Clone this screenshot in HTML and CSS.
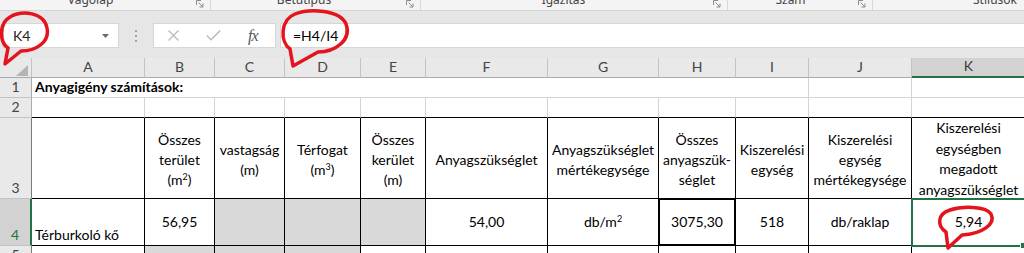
FILE: index.html
```html
<!DOCTYPE html>
<html lang="hu">
<head>
<meta charset="utf-8">
<title>Anyagigény számítások</title>
<link rel="stylesheet" href="styles.css">
</head>
<body>
<div class="app">
  <div class="ribbon">
    <div class="group g1"><span class="glabel">Vágólap</span><svg class="launcher" width="8" height="8" viewBox="0 0 8 8"><path d="M0.5 5V0.5H5M2.5 2.5L7 7M7 3.5V7H3.5" fill="none" stroke="#8a8a8a" stroke-width="1"/></svg></div>
    <div class="group g2"><span class="glabel">Betűtípus</span><svg class="launcher" width="8" height="8" viewBox="0 0 8 8"><path d="M0.5 5V0.5H5M2.5 2.5L7 7M7 3.5V7H3.5" fill="none" stroke="#8a8a8a" stroke-width="1"/></svg></div>
    <div class="group g3"><span class="glabel">Igazítás</span><svg class="launcher" width="8" height="8" viewBox="0 0 8 8"><path d="M0.5 5V0.5H5M2.5 2.5L7 7M7 3.5V7H3.5" fill="none" stroke="#8a8a8a" stroke-width="1"/></svg></div>
    <div class="group g4"><span class="glabel">Szám</span><svg class="launcher" width="8" height="8" viewBox="0 0 8 8"><path d="M0.5 5V0.5H5M2.5 2.5L7 7M7 3.5V7H3.5" fill="none" stroke="#8a8a8a" stroke-width="1"/></svg></div>
    <div class="group g5"><span class="glabel">Stílusok</span></div>
  </div>

  <div class="fbar">
    <div class="namebox"><span class="nb-text">K4</span><svg width="7" height="4" viewBox="0 0 7 4"><path d="M0 0H7L3.5 4Z" fill="#6a6a6a"/></svg></div>
    <div class="grip"><span class="dot"></span><span class="dot"></span><span class="dot"></span></div>
    <div class="fxbox">
      <svg class="ic-x" width="11" height="11" viewBox="0 0 11 11"><path d="M0.5 0.5L10.5 10.5M10.5 0.5L0.5 10.5" stroke="#bcbcbc" stroke-width="1.4" fill="none"/></svg>
      <svg class="ic-ok" width="15" height="11" viewBox="0 0 15 11"><path d="M0.8 5.5L5 9.8L14.2 0.6" stroke="#bcbcbc" stroke-width="1.5" fill="none"/></svg>
      <span class="fx">fx</span>
    </div>
    <div class="formula">=H4/I4</div>
  </div>

  <div class="sheet">
    <!-- column headers -->
    <div class="cell ch corner"><svg width="12" height="11" viewBox="0 0 12 11"><path d="M12 0V11H0Z" fill="#b4b4b4"/></svg></div>
    <div class="cell ch">A</div>
    <div class="cell ch">B</div>
    <div class="cell ch">C</div>
    <div class="cell ch">D</div>
    <div class="cell ch">E</div>
    <div class="cell ch">F</div>
    <div class="cell ch">G</div>
    <div class="cell ch">H</div>
    <div class="cell ch">I</div>
    <div class="cell ch">J</div>
    <div class="cell ch ch-sel">K</div>

    <!-- row 1 -->
    <div class="cell rh">1</div>
    <div class="cell left title span9">Anyagigény számítások:</div>
    <div class="cell"></div>
    <div class="cell"></div>

    <!-- row 2 -->
    <div class="cell rh">2</div>
    <div class="cell r2"></div>
    <div class="cell r2"></div>
    <div class="cell r2"></div>
    <div class="cell r2"></div>
    <div class="cell r2"></div>
    <div class="cell r2"></div>
    <div class="cell r2"></div>
    <div class="cell r2"></div>
    <div class="cell r2"></div>
    <div class="cell r2"></div>
    <div class="cell r2"></div>

    <!-- row 3 -->
    <div class="cell rh rh-t">3</div>
    <div class="cell tb"></div>
    <div class="cell tb hd"><span>Összes<br>terület<br>(m<sup class="sup">2</sup>)</span></div>
    <div class="cell tb hd"><span>vastagság<br>(m)</span></div>
    <div class="cell tb hd"><span>Térfogat<br>(m<sup class="sup">3</sup>)</span></div>
    <div class="cell tb hd"><span>Összes<br>kerület<br>(m)</span></div>
    <div class="cell tb hd"><span>Anyagszükséglet</span></div>
    <div class="cell tb hd"><span>Anyagszükséglet<br>mértékegysége</span></div>
    <div class="cell tb hd"><span>Összes<br>anyagszük-<br>séglet</span></div>
    <div class="cell tb hd"><span>Kiszerelési<br>egység</span></div>
    <div class="cell tb hd"><span>Kiszerelési<br>egység<br>mértékegysége</span></div>
    <div class="cell tb hd hd4"><span>Kiszerelési<br>egységben<br>megadott<br>anyagszükséglet</span></div>

    <!-- row 4 -->
    <div class="cell rh rh-sel">4</div>
    <div class="cell tb left">Térburkoló kő</div>
    <div class="cell tb">56,95</div>
    <div class="cell tb fill"></div>
    <div class="cell tb fill"></div>
    <div class="cell tb fill"></div>
    <div class="cell tb">54,00</div>
    <div class="cell tb"><span>db/m<sup class="sup">2</sup></span></div>
    <div class="cell tb boxed">3075,30</div>
    <div class="cell tb">518</div>
    <div class="cell tb">db/raklap</div>
    <div class="cell tb active">5,94<span class="handle"></span></div>

    <!-- row 5 -->
    <div class="cell rh rh-t">5</div>
    <div class="cell tb"></div>
    <div class="cell tb fill"></div>
    <div class="cell tb fill"></div>
    <div class="cell tb fill"></div>
    <div class="cell tb"></div>
    <div class="cell tb"></div>
    <div class="cell tb"></div>
    <div class="cell tb"></div>
    <div class="cell tb"></div>
    <div class="cell tb"></div>
    <div class="cell tb"></div>
  </div>

  <svg class="annot" width="1024" height="253" viewBox="0 0 1024 253">
    <path d="M8 48C0 43 -2 24 10 17C22 10 44 12 47 28C50 42 36 51 21 51L5 64L8 48" />
    <path d="M290 49C280 42 280 20 295 14C310 8 340 10 346 24C352 40 335 52 318 52L293 66L290 49" />
    <path d="M946 232C937 226 937 214 950 210C962 206 986 206 991 214C996 224 982 234 962 235L948 248L946 232" />
  </svg>
</div>
</body>
</html>
```

FILE: styles.css
```css
* {
  box-sizing: border-box;
  margin: 0;
  padding: 0;
}

html,
body {
  width: 1024px;
  height: 253px;
  overflow: hidden;
  background: #ffffff;
}

body {
  font-family: Lato, "Liberation Sans", sans-serif;
  font-size: 14px;
  color: #000;
}

.app {
  position: relative;
  width: 1024px;
  height: 253px;
  overflow: hidden;
}

/* ---------- ribbon (group labels, clipped) ---------- */
.ribbon {
  display: flex;
  height: 11px;
  background: #f4f4f4;
  border-bottom: 1px solid #d5d5d5;
  overflow: hidden;
  font-family: "Noto Sans", "Open Sans", sans-serif;
  font-size: 12px;
  color: #444;
}

.group {
  display: flex;
  align-items: flex-start;
  height: 10px;
  border-right: 1px solid #d8d8d8;
  flex: none;
}

.g1 { width: 211px; }
.g2 { width: 210px; }
.g3 { width: 307px; }
.g4 { width: 145px; }
.g5 { width: 244px; border-right: none; }

.glabel {
  flex: 1;
  text-align: center;
  line-height: 14px;
  margin-top: -7px;
  white-space: nowrap;
}

.g1 .glabel { padding-right: 15px; }
.g2 .glabel { padding-right: 9px; }
.g3 .glabel { padding-right: 7px; }
.g4 .glabel { padding-right: 5px; }

.launcher {
  flex: none;
  margin: 0 6px 0 0;
}

/* ---------- formula bar ---------- */
.fbar {
  display: flex;
  align-items: center;
  height: 47px;
  padding: 12px 0 10px 3px;
  background: #e6e6e6;
}

.namebox {
  display: flex;
  align-items: center;
  justify-content: space-between;
  width: 116px;
  height: 25px;
  padding: 0 9px 0 9px;
  background: #fff;
  border: 1px solid #d6d6d6;
  font-family: Lato, "Noto Sans", sans-serif;
  font-size: 14px;
  color: #222;
}

.grip {
  width: 34px;
  height: 25px;
  display: flex;
  flex-direction: column;
  align-items: center;
  justify-content: center;
  gap: 3px;
}

.dot {
  width: 2px;
  height: 2px;
  background: #a2a2a2;
}

.fxbox {
  display: flex;
  align-items: center;
  width: 123px;
  height: 25px;
  padding-left: 14px;
  background: #fff;
  border: 1px solid #d6d6d6;
}

.ic-ok { margin-left: 27px; }

.fx {
  margin-left: 27px;
  font-family: "Liberation Serif", serif;
  font-style: italic;
  font-size: 16px;
  color: #555;
  letter-spacing: -1px;
}

.formula {
  flex: 1;
  height: 25px;
  margin-left: 4px;
  padding-left: 12px;
  background: #fff;
  border: 1px solid #d6d6d6;
  border-right: none;
  line-height: 23px;
  font-size: 14px;
  color: #000;
}

/* ---------- sheet grid ---------- */
.sheet {
  display: grid;
  grid-template-columns: 32px 113px 70px 70px 76px 65px 122px 111px 77px 73px 103px 114px;
  grid-template-rows: 20px 20px 20px 81px 47px 20px;
  background: #fff;
}

.cell {
  display: flex;
  flex-direction: column;
  justify-content: center;
  align-items: center;
  text-align: center;
  line-height: 20px;
  white-space: nowrap;
  overflow: hidden;
  border-right: 1px solid #d4d4d4;
  border-bottom: 1px solid #d4d4d4;
}

.ch {
  background: #e9e9e9;
  border-right-color: #c3c3c3;
  border-bottom-color: #ababab;
  color: #444;
  justify-content: flex-end;
}

.corner {
  align-items: flex-end;
  padding: 0 3px 1px 0;
}

.ch-sel {
  background: #d2d2d2;
  border-bottom: 2px solid #217346;
  color: #3c3c3c;
}

.rh {
  background: #e9e9e9;
  border-right-color: #ababab;
  border-bottom-color: #c3c3c3;
  color: #444;
  justify-content: flex-end;
}

.rh-t {
  border-right-color: #7a7a7a;
}

.rh-sel {
  background: #d2d2d2;
  border-right: 2px solid #217346;
  color: #217346;
}

.left {
  align-items: flex-start;
  justify-content: flex-end;
  padding-left: 3px;
}

.title {
  font-weight: 700;
}

.span9 {
  grid-column: span 9;
}

.r2 {
  border-bottom-color: #000;
}

.tb {
  border-right-color: #000;
  border-bottom-color: #000;
}

.hd {
  padding-top: 3px;
}

.hd4 {
  padding-top: 0;
  line-height: 20.5px;
  justify-content: flex-start;
}

.fill {
  background: #d9d9d9;
}

.sup {
  font-size: 9px;
  line-height: 0;
  vertical-align: 5px;
}

.boxed {
  box-shadow: inset 1px 1px 0 #000, inset -1px -1px 0 #000;
}

.active {
  position: relative;
  z-index: 2;
  overflow: visible;
  outline: 2px solid #217346;
  outline-offset: -1px;
}

.handle {
  position: absolute;
  right: -2px;
  bottom: -4px;
  width: 7px;
  height: 7px;
  background: #217346;
  border: 1px solid #fff;
}

/* ---------- red annotations ---------- */
.annot {
  position: absolute;
  top: 0;
  left: 0;
  z-index: 10;
  pointer-events: none;
}

.annot path {
  fill: none;
  stroke: #e3141d;
  stroke-width: 3.5;
  stroke-linecap: round;
  stroke-linejoin: round;
}
```
